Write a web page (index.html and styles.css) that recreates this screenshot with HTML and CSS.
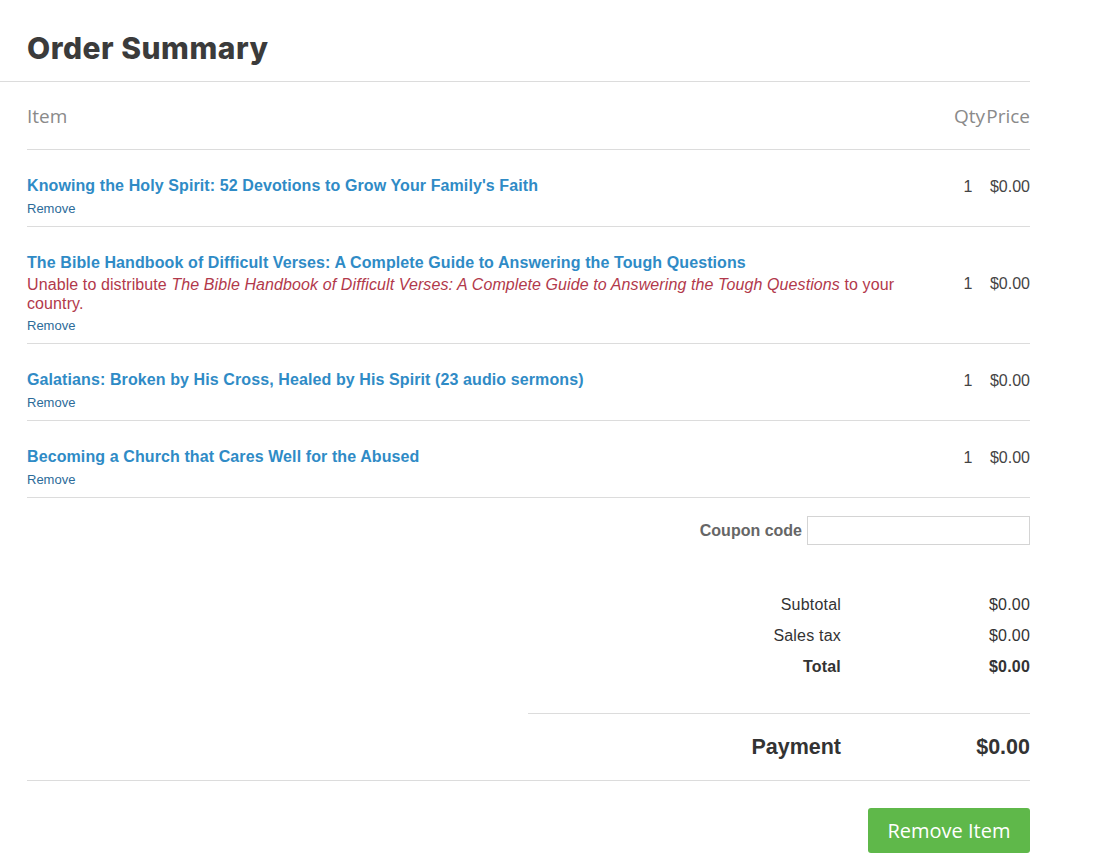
FILE: index.html
```html
<!DOCTYPE html>
<html lang="en">
<head>
<meta charset="utf-8">
<title>Order Summary</title>
<link rel="stylesheet" href="styles.css">
</head>
<body>
<div class="page">
  <header class="head">
    <h1 class="title">Order Summary</h1>
  </header>
  <div class="inner">
    <div class="cols">
      <div class="c-item">Item</div>
      <div class="c-qty">Qty</div>
      <div class="c-price">Price</div>
    </div>

    <div class="row">
      <div class="r-item">
        <a class="name" href="#">Knowing the Holy Spirit: 52 Devotions to Grow Your Family's Faith</a>
        <a class="remove" href="#">Remove</a>
      </div>
      <div class="r-qty">1</div>
      <div class="r-price">$0.00</div>
    </div>

    <div class="row">
      <div class="r-item">
        <a class="name" href="#">The Bible Handbook of Difficult Verses: A Complete Guide to Answering the Tough Questions</a>
        <p class="error">Unable to distribute <em>The Bible Handbook of Difficult Verses: A Complete Guide to Answering the Tough Questions</em> to your country.</p>
        <a class="remove" href="#">Remove</a>
      </div>
      <div class="r-qty">1</div>
      <div class="r-price">$0.00</div>
    </div>

    <div class="row">
      <div class="r-item">
        <a class="name" href="#">Galatians: Broken by His Cross, Healed by His Spirit (23 audio sermons)</a>
        <a class="remove" href="#">Remove</a>
      </div>
      <div class="r-qty">1</div>
      <div class="r-price">$0.00</div>
    </div>

    <div class="row">
      <div class="r-item">
        <a class="name" href="#">Becoming a Church that Cares Well for the Abused</a>
        <a class="remove" href="#">Remove</a>
      </div>
      <div class="r-qty">1</div>
      <div class="r-price">$0.00</div>
    </div>

    <div class="coupon">
      <label class="coupon-label" for="coupon">Coupon code</label>
      <input class="coupon-input" id="coupon" type="text">
    </div>

    <div class="totals">
      <div class="t-row"><span class="t-label">Subtotal</span><span class="t-val">$0.00</span></div>
      <div class="t-row"><span class="t-label">Sales tax</span><span class="t-val">$0.00</span></div>
      <div class="t-row bold"><span class="t-label">Total</span><span class="t-val">$0.00</span></div>
    </div>

    <div class="payment-wrap">
      <div class="payment">
        <span class="t-label">Payment</span><span class="t-val">$0.00</span>
      </div>
    </div>

    <div class="actions">
      <button class="btn" type="button">Remove Item</button>
    </div>
  </div>
</div>
</body>
</html>
```

FILE: styles.css
```css
html, body {
  margin: 0;
  padding: 0;
  background: #fff;
}
body {
  font-family: "Liberation Sans", Arial, sans-serif;
  color: #333;
}
.page {
  width: 1030px;
}
.head {
  height: 82px;
  box-sizing: border-box;
  border-bottom: 1px solid #dcdcdc;
  padding-left: 27px;
  padding-top: 15px;
  display: flex;
  align-items: center;
}
.title {
  margin: 0;
  font-family: "Inter", "Open Sans", sans-serif;
  font-weight: 800;
  font-size: 30px;
  letter-spacing: 0.5px;
  color: #3b3b3b;
}
.inner {
  padding-left: 27px;
}
.cols {
  display: flex;
  align-items: center;
  height: 67px;
  border-bottom: 1px solid #dcdcdc;
  font-family: "Open Sans", sans-serif;
  font-size: 19px;
  color: #8a8a8a;
}
.c-item { flex: 1; }
.c-qty { width: 34px; text-align: right; }
.c-price { width: 45px; text-align: right; }

.row {
  display: flex;
  align-items: center;
  padding: 26px 0 8px;
  border-bottom: 1px solid #dcdcdc;
}
.r-item {
  flex: 1;
  padding-right: 8px;
  display: flex;
  flex-direction: column;
  align-items: flex-start;
}
.name {
  font-weight: bold;
  font-size: 16px;
  line-height: 20px;
  letter-spacing: 0.1px;
  color: #2f8bc6;
  text-decoration: none;
}
.remove {
  margin-top: 4px;
  font-size: 13px;
  line-height: 18px;
  color: #2c6b99;
  text-decoration: none;
}
.error {
  margin: 2px 0 0;
  max-width: 870px;
  font-size: 16px;
  line-height: 19px;
  letter-spacing: 0.1px;
  color: #b2394b;
}
.r-qty, .r-price {
  font-size: 16px;
  line-height: 20px;
  color: #444;
  margin-top: -20px;
}
.r-qty { width: 34px; text-align: center; }
.r-price { width: 45px; text-align: right; }

.coupon {
  display: flex;
  justify-content: flex-end;
  align-items: center;
  margin-top: 18px;
  gap: 5px;
}
.coupon-label {
  font-weight: bold;
  font-size: 16px;
  color: #666;
}
.coupon-input {
  width: 223px;
  height: 29px;
  box-sizing: border-box;
  border: 1px solid #d4d4d4;
  margin: 0;
  padding: 0 6px;
}

.totals {
  margin-top: 44px;
}
.t-row {
  display: flex;
  justify-content: flex-end;
  font-size: 16px;
  line-height: 31px;
  letter-spacing: 0.2px;
  color: #333;
}
.t-row.bold { font-weight: bold; }
.t-label {
  text-align: right;
}
.t-val {
  width: 189px;
  text-align: right;
}

.payment-wrap {
  margin-top: 31px;
  border-bottom: 1px solid #dcdcdc;
  display: flex;
  justify-content: flex-end;
}
.payment {
  width: 502px;
  border-top: 1px solid #dcdcdc;
  height: 66px;
  display: flex;
  justify-content: flex-end;
  align-items: center;
  font-weight: bold;
  font-size: 21.5px;
  color: #333;
}

.actions {
  display: flex;
  justify-content: flex-end;
  margin-top: 27px;
}
.btn {
  width: 162px;
  height: 45px;
  border: none;
  border-radius: 3px;
  background: #5fb84a;
  color: #fff;
  font-family: "Open Sans", sans-serif;
  font-size: 20px;
  cursor: pointer;
}
```
